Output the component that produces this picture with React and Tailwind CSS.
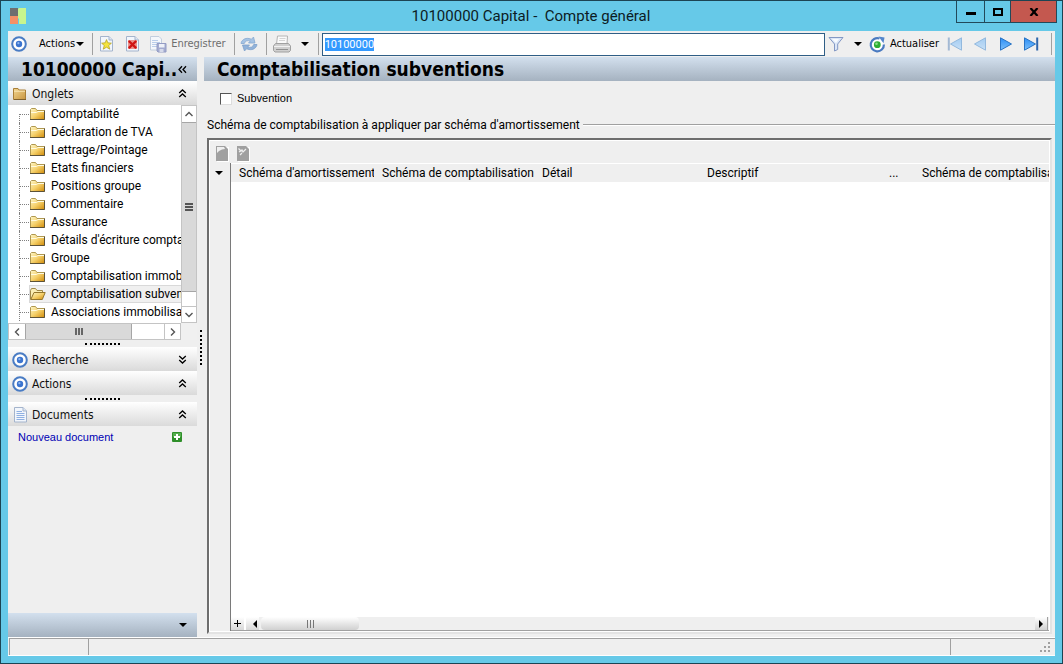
import { useEffect, useRef } from "react";

const TAHOMA = "font-['DejaVu_Sans_Condensed','DejaVu_Sans',sans-serif]";
const ARIAL = "font-['Liberation_Sans',Arial,sans-serif]";

const TABS = [
  "Comptabilité",
  "Déclaration de TVA",
  "Lettrage/Pointage",
  "Etats financiers",
  "Positions groupe",
  "Commentaire",
  "Assurance",
  "Détails d'écriture comptable",
  "Groupe",
  "Comptabilisation immobilisations",
  "Comptabilisation subventions",
  "Associations immobilisations",
];
const SELECTED = "Comptabilisation subventions";

const COLUMNS = [
  { name: "Schéma d'amortissement", width: "w-[143px]" },
  { name: "Schéma de comptabilisation", width: "w-[160px]" },
  { name: "Détail", width: "w-[165px]" },
  { name: "Descriptif", width: "w-[182px]" },
  { name: "...", width: "w-[33px]" },
  { name: "Schéma de comptabilisation", width: "" },
];

function TargetIcon() {
  return (
    <svg width="16" height="16" viewBox="0 0 16 16" className="shrink-0">
      <circle cx="8" cy="8" r="6.8" fill="#fff" stroke="#4a7cc4" strokeWidth="2" />
      <circle cx="8" cy="8" r="3.2" fill="#3b74cf" />
      <circle cx="7.4" cy="7.2" r="1.1" fill="#8fb6ee" />
    </svg>
  );
}

function Gradients() {
  return (
    <svg width="0" height="0" className="absolute" aria-hidden="true">
      <defs>
        <linearGradient id="folder" x1="0" y1="0" x2="1" y2="1">
          <stop offset="0" stopColor="#fdf6c8" />
          <stop offset="0.5" stopColor="#f5d06a" />
          <stop offset="1" stopColor="#d08a08" />
        </linearGradient>
        <linearGradient id="closedFolder" x1="0" y1="0" x2="1" y2="1">
          <stop offset="0" stopColor="#f2d590" />
          <stop offset="1" stopColor="#c99640" />
        </linearGradient>
        <linearGradient id="blue" x1="0" y1="0" x2="0" y2="1">
          <stop offset="0" stopColor="#2b8df5" />
          <stop offset="1" stopColor="#7cc0fb" />
        </linearGradient>
        <linearGradient id="paleBlue" x1="0" y1="0" x2="0" y2="1">
          <stop offset="0" stopColor="#a3ccf2" />
          <stop offset="1" stopColor="#c8e0f6" />
        </linearGradient>
      </defs>
    </svg>
  );
}

function Folder({ open }) {
  return (
    <svg width="16" height="14" viewBox="0 0 16 14" className="shrink-0">
      {open ? (
        <>
          <path d="M0.5 12.5V3.5L1.5 1.5H5.5L7 3.5H12.5V6" fill="#fbeeb4" stroke="#a08848" />
          <path d="M0.8 12.5L4 5.5H15.2L12.3 12.5Z" fill="url(#folder)" stroke="#94762c" />
        </>
      ) : (
        <>
          <path d="M0.5 12.5V2.5L1.5 1.5H5.5L7 3.5H14.5V12.5Z" fill="url(#folder)" stroke="#b09850" />
          <path d="M0 12.5H14.5V3.5" fill="none" stroke="#5c5238" />
          <path d="M1 5.5H6.5L8 4.5H14" fill="none" stroke="#fffbe0" />
        </>
      )}
    </svg>
  );
}

function BigFolder() {
  return (
    <svg width="16" height="16" viewBox="0 0 16 16" className="shrink-0">
      <path d="M1.5 13.5V2.5H6L7 4H13.5V13.5Z" fill="url(#closedFolder)" stroke="#a97f38" />
      <path d="M2 5.2H13" stroke="#fae8b8" />
      <path d="M2 13.5H14" stroke="#80602c" />
    </svg>
  );
}

function Page({ children }) {
  return (
    <svg width="16" height="16" viewBox="0 0 16 16" className="shrink-0">
      <path d="M2.5 0.5H11L14.5 4V15H2.5Z" fill="#f2f6fc" stroke="#a4b4cc" />
      <path d="M11 0.5V4H14.5" fill="#dce6f4" stroke="#a4b4cc" />
      {children}
    </svg>
  );
}

function Lines() {
  return <path d="M4.5 4.5H10M4.5 6.5H12.5M4.5 8.5H12.5M4.5 10.5H12.5M4.5 12.5H12.5" stroke="#8fb0e2" />;
}

function StarPage() {
  return (
    <Page>
      <path d="M8.5 3.6L9.8 6.8L13.4 7.2L10.7 9.5L11.8 13.2L8.5 11.2L5.2 13.2L6.3 9.5L3.6 7.2L7.2 6.8Z" fill="#f4e43c" stroke="#b8a428" strokeWidth="0.8" />
    </Page>
  );
}

function CrossPage() {
  return (
    <Page>
      <rect x="4" y="4" width="9" height="9" fill="#eb928c" />
      <path d="M4.8 5L12.2 12.2M12.2 5L4.8 12.2" stroke="#cf1414" strokeWidth="2.4" />
    </Page>
  );
}

function SaveIcon() {
  return (
    <svg width="17" height="17" viewBox="0 0 17 17" className="shrink-0">
      <path d="M0.5 0.5H9L11.5 3V14H0.5Z" fill="#f4f7fb" stroke="#c2cede" />
      <path d="M2 4.5H8M2 6.5H10M2 8.5H7M2 10.5H7" stroke="#b9cdea" />
      <path d="M7 7.5H16V16H8L7 15Z" fill="#a3abd0" stroke="#949cc4" />
      <rect x="9" y="8" width="5.5" height="3.5" fill="#eef1f8" />
      <rect x="9.5" y="13" width="4" height="3" fill="#d6daea" />
    </svg>
  );
}

function SyncIcon() {
  return (
    <svg width="18" height="16" viewBox="0 0 18 16" className="shrink-0">
      <path d="M1 7.5C1.5 4 5 1.8 9 2.5L11.5 3.2L13.5 1L15 7H8.5L10.3 5C7.5 4 5 5 4.3 7.5Z" fill="#a5c3e4" stroke="#86a8d0" strokeWidth="0.8" />
      <path d="M17 8.5C16.5 12 13 14.3 9 13.5L6.5 12.8L4.5 15L2.5 9H9.5L7.7 11C10.5 12 13 11 13.7 8.5Z" fill="#92b3da" stroke="#7c9fca" strokeWidth="0.8" />
    </svg>
  );
}

function PrinterIcon() {
  return (
    <svg width="20" height="18" viewBox="0 0 20 18" className="shrink-0">
      <path d="M4.5 9L5.5 1H15.5L15 9Z" fill="#fafafa" stroke="#b4b4b4" />
      <path d="M7.5 3.5H13.5M7 5.5H13" stroke="#d4d4d4" />
      <path d="M3.5 8.5H16.5L18.5 11V15.5L17 17H3L1.5 15.5V11Z" fill="#cfcfcf" stroke="#a0a0a0" />
      <path d="M2 11.5H18" stroke="#f2f2f2" />
      <path d="M4 14.5H16" stroke="#909090" />
    </svg>
  );
}

function Funnel() {
  return (
    <svg width="16" height="16" viewBox="0 0 16 16" className="shrink-0">
      <path d="M1 1.5H15L9.7 8V13.5L6.5 15V8Z" fill="#dbe6f7" stroke="#8398c4" />
      <path d="M4 3H11L8 7Z" fill="#f8fbff" />
    </svg>
  );
}

function RefreshIcon() {
  return (
    <svg width="17" height="17" viewBox="0 0 17 17" className="shrink-0">
      <circle cx="8.3" cy="8.7" r="6.4" fill="#fff" />
      <path d="M10.5 2.5A6.6 6.6 0 1 0 14.9 8.5" fill="none" stroke="#4a7ac0" strokeWidth="2.2" />
      <path d="M9.5 0.5L15.5 1.5L14.5 7.2Z" fill="#5486cc" />
      <circle cx="8.3" cy="8.7" r="3.4" fill="#2fae35" />
      <circle cx="7.5" cy="7.8" r="1.3" fill="#8be08a" />
    </svg>
  );
}

function NavIcon({ back, edge, pale }) {
  return (
    <svg width="16" height="16" viewBox="0 0 16 16" className={back ? "shrink-0 -scale-x-100" : "shrink-0"}>
      <path d="M1.5 1.8L12.5 8L1.5 14.2Z" fill={pale ? "url(#paleBlue)" : "url(#blue)"} stroke={pale ? "#93b9de" : "#2873c4"} />
      {edge && <path d="M14.2 1.5V14.5" stroke={pale ? "#a3b9d4" : "#2f66ac"} strokeWidth="2" />}
    </svg>
  );
}

function Caret() {
  return (
    <svg width="8" height="4" viewBox="0 0 8 4" className="shrink-0">
      <path d="M0 0H8L4 4Z" fill="#000" />
    </svg>
  );
}

function DoubleChevron({ down, left }) {
  const turn = down ? "rotate-180" : left ? "-rotate-90" : "";
  return (
    <svg width="9" height="9" viewBox="0 0 9 9" className={turn}>
      <path d="M1.2 4L4.5 1L7.8 4M1.2 8L4.5 5L7.8 8" fill="none" stroke="#000" strokeWidth="1.3" />
    </svg>
  );
}

function ScrollArrow({ className = "" }) {
  return (
    <svg width="8" height="8" viewBox="0 0 8 8" className={className}>
      <path d="M0.5 6L4 2.5L7.5 6" fill="none" stroke="#555" strokeWidth="1.4" />
    </svg>
  );
}

function Separator() {
  return <span className="h-[22px] w-px shrink-0 bg-[#a0a0a0]" />;
}

function Section({ icon, title, down }) {
  return (
    <button type="button" className="flex h-6 w-full shrink-0 items-center bg-linear-to-b from-white to-[#dadada] pt-px pr-2.5 pl-1 text-left text-[12px] text-[#111]">
      {icon}
      <span className="ml-1 flex-1">{title}</span>
      <DoubleChevron down={down} />
    </button>
  );
}

function Grip() {
  return (
    <div className="flex h-[7px] shrink-0 items-center justify-center">
      <span className="w-[35px] border-t-2 border-dotted border-black" />
    </div>
  );
}

function Heading({ children, action }) {
  return (
    <div className="flex h-6 shrink-0 items-center bg-linear-to-b from-[#d3e0ee] to-[#a5b2c0] pl-[13px]">
      {children}
      {action}
    </div>
  );
}

function TitleBar() {
  return (
    <header className="flex h-[30px] shrink-0 items-center">
      <svg width="16" height="16" viewBox="0 0 16 16" className="ml-0.5 shrink-0">
        <path d="M0 0H8V8H0Z" fill="#6f6f6f" />
        <path d="M0 8H8V16H0Z" fill="#f59066" />
        <path d="M9 0H16V16H9V11L8 10V1Z" fill="#c8f58e" />
      </svg>
      <h1 className="ml-20 flex-1 text-center text-[15px] whitespace-pre text-[#0c1c24]">
        {"10100000 Capital -  Compte général"}
      </h1>
      <div className="mr-[-2px] flex h-[22px] self-start border border-t-0 border-[#22495a]">
        <button type="button" aria-label="Réduire" className="flex w-[28px] items-center justify-center border-r border-[#22495a]">
          <span className="mt-1 h-[3px] w-2.5 bg-black" />
        </button>
        <button type="button" aria-label="Agrandir" className="flex w-[26px] items-center justify-center border-r border-[#22495a]">
          <span className="h-2 w-2.5 border-2 border-black" />
        </button>
        <button type="button" aria-label="Fermer" className="flex w-[45px] items-center justify-center bg-[#c4584f]">
          <svg width="10" height="8" viewBox="0 0 10 8">
            <path d="M1.5 0L8.5 8M8.5 0L1.5 8" stroke="#000" strokeWidth="2.2" />
          </svg>
        </button>
      </div>
    </header>
  );
}

function Toolbar() {
  const input = useRef(null);
  useEffect(() => {
    input.current.focus();
    input.current.select();
  }, []);
  return (
    <div className={"flex h-[26px] shrink-0 items-center text-[11px] text-black " + TAHOMA}>
      <button type="button" className="ml-[3px] flex items-center">
        <TargetIcon />
        <span className="ml-3">Actions</span>
        <span className="ml-px flex"><Caret /></span>
      </button>
      <span className="w-2" />
      <Separator />
      <button type="button" aria-label="Nouveau" className="ml-[5px]"><StarPage /></button>
      <button type="button" aria-label="Supprimer" className="ml-2.5"><CrossPage /></button>
      <button type="button" className="ml-2.5 flex items-center text-[#6d6d6d]">
        <SaveIcon />
        <span className="ml-1">Enregistrer</span>
      </button>
      <span className="w-2" />
      <Separator />
      <button type="button" aria-label="Synchroniser" className="ml-[5px]"><SyncIcon /></button>
      <span className="w-2" />
      <Separator />
      <button type="button" aria-label="Imprimer" className="ml-[5px]"><PrinterIcon /></button>
      <button type="button" aria-label="Options d'impression" className="ml-2 px-px"><Caret /></button>
      <span className="w-2" />
      <Separator />
      <input
        ref={input}
        aria-label="Compte"
        defaultValue="10100000"
        className="ml-[3px] h-[23px] min-w-0 flex-1 border border-[#2f5e86] bg-white px-0.5 font-[Roboto,sans-serif] text-[11px] outline-none selection:bg-[#3399ff] selection:text-white"
      />
      <button type="button" aria-label="Filtrer" className="ml-[3px]"><Funnel /></button>
      <button type="button" aria-label="Options de filtre" className="ml-2 px-0.5"><Caret /></button>
      <button type="button" className="ml-[5px] flex items-center">
        <RefreshIcon />
        <span className="ml-1">Actualiser</span>
      </button>
      <button type="button" aria-label="Premier" className="ml-2"><NavIcon back edge pale /></button>
      <button type="button" aria-label="Précédent" className="ml-2"><NavIcon back pale /></button>
      <button type="button" aria-label="Suivant" className="ml-3"><NavIcon /></button>
      <button type="button" aria-label="Dernier" className="ml-2"><NavIcon edge /></button>
      <span className="w-3" />
      <Separator />
      <span className="w-[3px]" />
    </div>
  );
}

function TabTree() {
  return (
    <div className="shrink-0 bg-white">
      <div className="flex">
        <ul className="min-w-0 flex-1 overflow-hidden pb-0.5">
          {TABS.map((tab, i) => (
            <li key={tab} className="flex h-[18px] items-center pl-[11px]">
              <span className={"flex w-2.5 border-l border-dotted border-[#808080] " + (i === 0 ? "h-[9px] items-start self-end" : "h-[18px] items-center")}>
                <span className="w-full border-t border-dotted border-[#808080]" />
              </span>
              <button
                type="button"
                className={"flex h-[18px] min-w-0 flex-1 items-center border text-[12px] whitespace-nowrap text-black " + (tab === SELECTED ? "border-r-0 border-[#d9d9d9] bg-[#f0f0f0]" : "border-transparent")}
              >
                <Folder open={tab === SELECTED} />
                <span className="ml-[5px]">{tab}</span>
              </button>
            </li>
          ))}
        </ul>
        <div className="flex w-4 flex-col border border-[#c4c4c4]">
          <span className="flex h-4 items-center justify-center"><ScrollArrow /></span>
          <span className="flex flex-1 items-center justify-center border-y border-[#a6a6a6] bg-[#d9d9d9]">
            <span className="h-2 w-2 border-y-2 border-[#555] bg-[linear-gradient(#d9d9d9_1px,#555_1px,#555_3px,#d9d9d9_3px)]" />
          </span>
          <span className="h-3.5" />
          <span className="flex h-4 items-center justify-center border-t border-[#c4c4c4]"><ScrollArrow className="rotate-180" /></span>
        </div>
      </div>
      <div className="flex bg-[#f0f0f0] pr-4">
        <div className="flex h-[17px] flex-1 border border-[#c4c4c4] bg-white">
          <span className="flex w-4 items-center justify-center"><ScrollArrow className="-rotate-90" /></span>
          <span className="flex w-[107px] items-center justify-center gap-px border-x border-[#a6a6a6] bg-[#d9d9d9]">
            <span className="h-[7px] w-0.5 bg-[#666]" />
            <span className="h-[7px] w-0.5 bg-[#666]" />
            <span className="h-[7px] w-0.5 bg-[#666]" />
          </span>
          <span className="flex-1" />
          <span className="flex w-4 items-center justify-center border-l border-[#c4c4c4]"><ScrollArrow className="rotate-90" /></span>
        </div>
      </div>
    </div>
  );
}

function Sidebar() {
  return (
    <aside className={"flex w-[189px] shrink-0 flex-col " + TAHOMA}>
      <Heading
        action={
          <button type="button" aria-label="Replier" className="mr-2.5">
            <DoubleChevron left />
          </button>
        }
      >
        <h2 className="min-w-0 flex-1 text-[19px] leading-6 font-bold whitespace-nowrap text-black">10100000 Capi..</h2>
      </Heading>
      <Section icon={<BigFolder />} title="Onglets" />
      <div className="font-[Roboto,sans-serif]"><TabTree /></div>
      <Grip />
      <Section icon={<TargetIcon />} title="Recherche" down />
      <Section icon={<TargetIcon />} title="Actions" />
      <Grip />
      <Section icon={<Page><Lines /></Page>} title="Documents" />
      <div className={"flex flex-1 items-start justify-between pt-1 pr-[15px] pl-2.5 text-[11px] " + ARIAL}>
        <a href="#nouveau" className="leading-[15px] text-[#0000b4]">Nouveau document</a>
        <button type="button" aria-label="Ajouter" className="mt-0.5">
          <svg width="10" height="10" viewBox="0 0 10 10">
            <rect width="10" height="10" rx="1" fill="#2f8f2a" />
            <rect x="1" y="1" width="8" height="4" fill="#56ad4e" />
            <path d="M5 2V8M2 5H8" stroke="#fff" strokeWidth="2" />
          </svg>
        </button>
      </div>
      <button type="button" aria-label="Configurer" className="flex h-6 shrink-0 items-center justify-end bg-linear-to-b from-[#d3e0ee] to-[#a5b2c0] pr-2.5">
        <Caret />
      </button>
    </aside>
  );
}

function DisabledPage({ cross }) {
  return (
    <svg width="13" height="16" viewBox="0 0 13 16">
      <path d="M1 1H13V16H1Z" fill="#fff" />
      <path d="M0 0H9L12 3V15H0Z" fill="#a0a0a0" />
      {cross ? (
        <path d="M1.5 2.5L4.5 5.5M2 6L5 4L6 6L9 3M3 9L5 7" stroke="#efefef" strokeWidth="1.2" fill="none" />
      ) : (
        <path d="M1 1H8L9 3L6 3.5L3 5L1 7Z" fill="#efefef" />
      )}
    </svg>
  );
}

function Grid() {
  return (
    <div className="mr-[3px] ml-[3px] flex min-h-0 flex-1 flex-col border-2 border-t-[#6e6e6e] border-r-[#e3e3e3] border-b-[#e3e3e3] border-l-[#6e6e6e] bg-white p-px">
      <div className="flex min-h-0 flex-1 flex-col">
        <div className="flex h-[22px] shrink-0 items-center gap-2 bg-[#efefef] pt-1 pl-1.5">
          <button type="button" aria-label="Nouvelle ligne" className="w-[13px]"><DisabledPage /></button>
          <button type="button" aria-label="Supprimer la ligne" className="w-[13px]"><DisabledPage cross /></button>
        </div>
        <div className="flex min-h-0 flex-1">
          <div className="flex w-[21px] shrink-0 items-start border-r border-[#7a7a7a] bg-[#efefef] pt-2 pl-[5px]">
            <button type="button" aria-label="Menu de la grille" className="flex"><Caret /></button>
          </div>
          <div className="flex min-w-0 flex-1 flex-col">
            <div className="min-h-0 flex-1 overflow-hidden border-t border-white">
              <table className="w-full table-fixed">
                <thead>
                  <tr className="h-[18px] bg-[#efefef] text-left text-[12px] text-black">
                    {COLUMNS.map((c, i) => (
                      <th key={i} className={"overflow-hidden p-0 pl-2 leading-[18px] font-normal whitespace-nowrap " + c.width}>{c.name}</th>
                    ))}
                  </tr>
                </thead>
                <tbody />
              </table>
            </div>
            <div className="flex h-3.5 shrink-0 items-stretch border-b border-[#a0a0a0] bg-[#efefef]">
              <button type="button" aria-label="Ajouter une ligne" className="flex w-[15px] items-center justify-center border-r-2 border-white bg-linear-to-b from-white to-[#d8d8d8]">
                <svg width="7" height="7" viewBox="0 0 7 7"><path d="M3.5 0V7M0 3.5H7" stroke="#000" /></svg>
              </button>
              <span className="flex w-[13px] items-center justify-end bg-linear-to-b from-white to-[#d8d8d8] pr-0.5">
                <svg width="4" height="8" viewBox="0 0 4 8"><path d="M4 0V8L0 4Z" /></svg>
              </span>
              <span className="ml-0.5 flex w-[98px] items-center justify-center gap-0.5 rounded-sm bg-linear-to-b from-white to-[#d0d0d0]">
                <span className="h-2 w-px bg-[#777]" />
                <span className="h-2 w-px bg-[#777]" />
                <span className="h-2 w-px bg-[#777]" />
              </span>
              <span className="flex-1" />
              <span className="mr-px flex w-[13px] items-center justify-center border-r border-[#a0a0a0] bg-linear-to-b from-white to-[#d0d0d0]">
                <svg width="4" height="8" viewBox="0 0 4 8"><path d="M0 0V8L4 4Z" /></svg>
              </span>
            </div>
          </div>
        </div>
      </div>
    </div>
  );
}

function StatusBar() {
  return (
    <footer className="flex h-[19px] shrink-0 items-stretch border-y border-white pl-px">
      <span className="w-[79px] border-t border-l border-[#a0a0a0]" />
      <span className="flex-1 border-t border-l border-[#a0a0a0]" />
      <span className="flex w-[105px] items-end justify-end border-t border-l border-[#a0a0a0] pr-1 pb-0.5">
        <svg width="11" height="11" viewBox="0 0 11 11">
          <path d="M8 0H10V2H8ZM4 4H6V6H4ZM8 4H10V6H8ZM0 8H2V10H0ZM4 8H6V10H4ZM8 8H10V10H8Z" fill="#a0a0a0" />
        </svg>
      </span>
    </footer>
  );
}

export default function App() {
  return (
    <div className="flex h-screen flex-col overflow-hidden border border-[#1c4453] bg-[#66c9e8] px-[7px] pb-[7px] font-[Roboto,sans-serif]">
      <Gradients />
      <TitleBar />
      <div className="flex min-h-0 flex-1 flex-col bg-[#efefef]">
        <Toolbar />
        <div className="flex min-h-0 flex-1">
          <Sidebar />
          <div className="w-[7px] shrink-0 pt-[273px]">
            <div className="ml-[3px] h-[35px] border-l-2 border-dotted border-black" />
          </div>
          <main className="flex min-w-0 flex-1 flex-col pb-[3px]">
            <Heading>
              <h2 className={"text-[19px] leading-6 font-bold text-black " + TAHOMA}>Comptabilisation subventions</h2>
            </Heading>
            <label className={"flex h-[35px] shrink-0 items-center pl-4 text-[11px] text-black " + ARIAL}>
              <input type="checkbox" className="mr-[5px] size-3 appearance-none border border-t-[#555] border-r-[#ddd] border-b-[#ddd] border-l-[#555] bg-white" />
              Subvention
            </label>
            <div className="flex h-[22px] shrink-0 items-center pb-[5px] pl-[3px]">
              <h3 className="text-[12px] leading-4 text-black">Schéma de comptabilisation à appliquer par schéma d'amortissement</h3>
              <span className="ml-[3px] h-0.5 flex-1 border-t border-b border-t-[#a0a0a0] border-b-white" />
            </div>
            <Grid />
          </main>
        </div>
        <StatusBar />
      </div>
    </div>
  );
}
